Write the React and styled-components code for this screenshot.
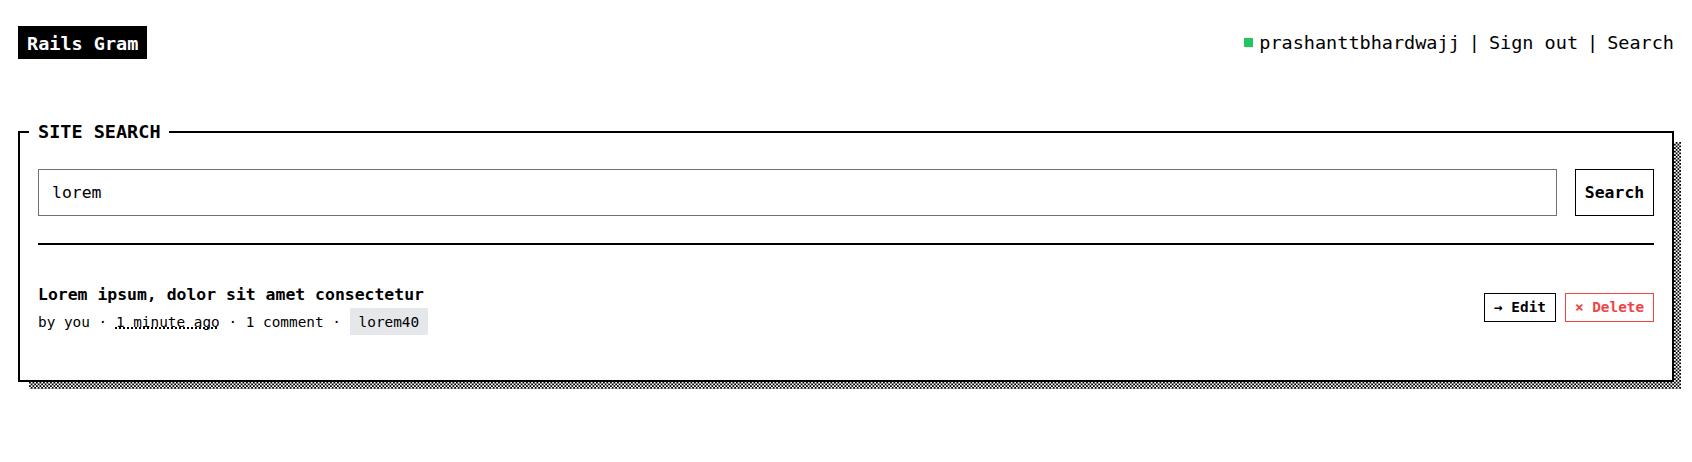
import React from "react";
import styled, { createGlobalStyle } from "styled-components";

const Global = createGlobalStyle`
  *, *::before, *::after { box-sizing: border-box; }
  body { margin: 0; background: #fff; color: #000; font: 16.444px/27px "DejaVu Sans Mono", monospace; }
  button, input { font: inherit; color: inherit; margin: 0; border-radius: 0; }
  a { color: inherit; text-decoration: none; }
`;
const Page = styled.div`min-height: 100vh; padding: 26px 18px 0; isolation: isolate;`;
const Header = styled.header`
  display: flex; justify-content: space-between; align-items: flex-start;
  font-size: 18.5px; line-height: 33px;
`;
const Logo = styled.a`
  background: #000; color: #fff; font-weight: 700; padding: 2px 9px 0; line-height: 31px;
`;
const Nav = styled.nav`display: flex; align-items: center;`;
const Status = styled.span`width: 9px; height: 9px; background: #22c55e; margin-right: 6px;`;
const Divider = styled.span`margin: 0 9px;`;
const PanelWrap = styled.div`
  position: relative; margin-top: 59px;
  &::before {
    content: ""; position: absolute; z-index: -1; left: 11px; right: -7px; top: 24px; bottom: -7px;
    background: conic-gradient(#000 25%, #fff 0 50%, #000 0 75%, #fff 0) 0 0 / 3.5px 3.5px;
  }
`;
const PanelFill = styled.div`
  background: linear-gradient(#fff, #fff) 0 13px / 100% 100% no-repeat;
`;
const Panel = styled.fieldset`
  margin: 0; min-width: 0; height: 264px; padding: 23px 18px 0; border: 2px solid #000;
`;
const Legend = styled.legend`
  margin-left: -9px; padding: 0 8px 0 9px; font-size: 18.5px; line-height: 28px; font-weight: 700; text-transform: uppercase;
`;
const SearchForm = styled.form`display: flex; gap: 18px; height: 47px;`;
const SearchInput = styled.input`
  flex: 1; min-width: 0; padding: 0 13px; border: 1px solid #6b7280; background: #fff; outline: 0;
`;
const SearchButton = styled.button`
  width: 79px; padding: 0; border: 1px solid #000; background: #fff; font-weight: 700;
`;
const Rule = styled.hr`margin: 27px 0 36px; border: 0; border-top: 2px solid #000;`;
const Result = styled.article`display: flex; justify-content: space-between; align-items: flex-start;`;
const Title = styled.h2`margin: 0; font-size: 16.444px; line-height: 27px; font-weight: 700;`;
const Meta = styled.div`font-size: 14.388px; line-height: 29px; white-space: nowrap;`;
const Time = styled.abbr`text-decoration: underline dotted 2px; text-decoration-skip-ink: none; text-underline-offset: 0;`;
const Tag = styled.a`display: inline-block; padding: 2px 9px 0; line-height: 25px; background: #e5e7eb;`;
const Actions = styled.div`display: flex; gap: 9px; margin-top: 12px;`;
const Action = styled.button`
  width: ${(p) => p.$width}px; height: 29px; padding: 0; border: 1px solid currentColor; background: #fff;
  color: ${(p) => (p.$danger ? "#ef4444" : "#000")}; font-size: 14.388px; line-height: 25px; font-weight: 700; white-space: nowrap;
`;

export default function App() {
  return (
    <Page>
      <Global />
      <Header>
        <Logo>Rails Gram</Logo>
        <Nav>
          <Status /><a>prashanttbhardwajj</a><Divider>|</Divider><a>Sign out</a><Divider>|</Divider><a>Search</a>
        </Nav>
      </Header>
      <PanelWrap>
        <PanelFill>
          <Panel>
            <Legend>Site Search</Legend>
            <SearchForm>
              <SearchInput defaultValue="lorem" />
              <SearchButton type="button">Search</SearchButton>
            </SearchForm>
            <Rule />
            <Result>
              <div>
                <Title>Lorem ipsum, dolor sit amet consectetur</Title>
                <Meta>by you · <Time>1 minute ago</Time> · 1 comment · <Tag>lorem40</Tag></Meta>
              </div>
              <Actions>
                <Action $width={72}>→ Edit</Action>
                <Action $width={89} $danger>× Delete</Action>
              </Actions>
            </Result>
          </Panel>
        </PanelFill>
      </PanelWrap>
    </Page>
  );
}
